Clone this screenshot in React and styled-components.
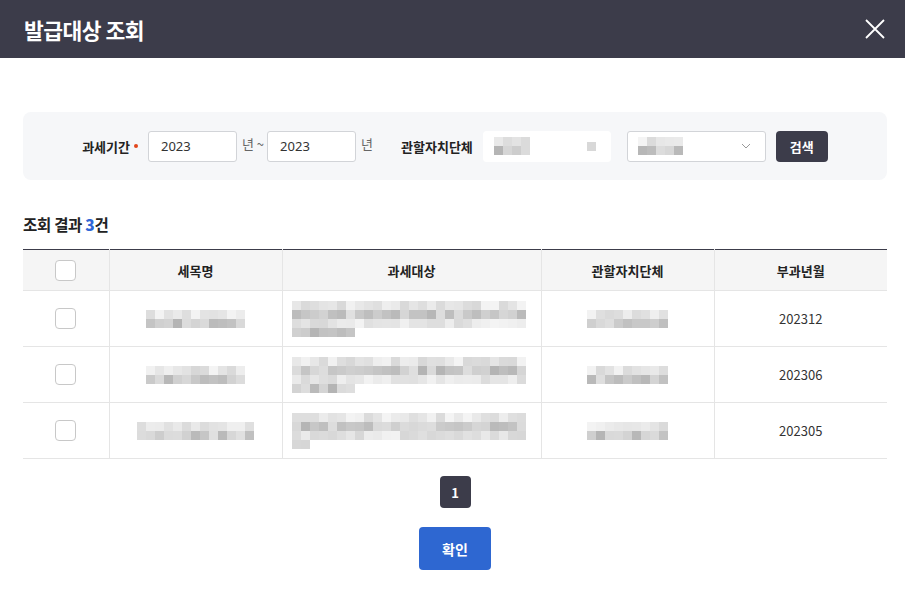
import React from "react";
import styled, { createGlobalStyle } from "styled-components";

const Global = createGlobalStyle`
  html, body { margin: 0; padding: 0; background: #fff; }
  body { font-family: "Noto Sans CJK KR", "Noto Sans", sans-serif; color: #222; }
  * { box-sizing: border-box; }
`;

const Modal = styled.div`
  width: 905px;
  height: 594px;
  background: #fff;
  display: flex;
  flex-direction: column;
  overflow: hidden;
`;

const Header = styled.header`
  height: 58px;
  flex: none;
  background: #3c3c4a;
  display: flex;
  align-items: center;
  justify-content: space-between;
  padding: 0 18px 0 24px;
`;

const Title = styled.h1`
  margin: 0;
  font-size: 21.5px;
  font-weight: 700;
  color: #fff;
  letter-spacing: -0.5px;
`;

const CloseBtn = styled.button`
  border: 0;
  background: none;
  padding: 0;
  width: 24px;
  height: 24px;
  display: flex;
  align-items: center;
  justify-content: center;
  cursor: pointer;
`;

const Body = styled.div`
  padding: 54px 18px 0 23px;
  display: flex;
  flex-direction: column;
`;

const SearchBox = styled.div`
  height: 68px;
  background: #f6f7f9;
  border-radius: 8px;
  display: flex;
  align-items: center;
  justify-content: center;
`;

const Label = styled.span`
  font-size: 13px;
  font-weight: 700;
  color: #222;
  margin-right: ${(p) => p.$mr || 10}px;
  display: inline-flex;
  align-items: center;
`;

const Req = styled.i`
  width: 4px;
  height: 4px;
  border-radius: 50%;
  background: #e2461c;
  margin-left: 4px;
  display: inline-block;
`;

const Input = styled.div`
  width: 89px;
  height: 31px;
  background: #fff;
  border: 1px solid #d2d4d8;
  border-radius: 3px;
  font-size: 13px;
  color: #333;
  display: flex;
  align-items: center;
  padding-left: 12px;
  font-family: "Noto Sans", sans-serif;
`;

const Unit = styled.span`
  font-size: 13px;
  color: #666;
  margin: 0 ${(p) => p.$mr || 3}px 0 5px;
  position: relative;
  top: -3px;
`;

const SelectBox = styled.div`
  width: ${(p) => p.$w}px;
  height: 31px;
  background: #fff;
  border: 1px solid ${(p) => (p.$bordered ? "#d2d4d8" : "#fff")};
  border-radius: 3px;
  display: flex;
  align-items: center;
  justify-content: space-between;
  padding: 0 14px 0 10px;
  margin-right: ${(p) => p.$mr || 0}px;
`;

const SearchBtn = styled.button`
  width: 52px;
  height: 31px;
  border: 0;
  border-radius: 4px;
  background: #3c3c4a;
  color: #fff;
  font-family: inherit;
  font-size: 13px;
  font-weight: 700;
  margin-left: 10px;
`;

const ResultTitle = styled.h2`
  margin: 33px 0 0;
  font-size: 15.5px;
  font-weight: 700;
  color: #222;
  letter-spacing: -0.3px;
  b { color: #2f67d6; }
`;

const Table = styled.table`
  margin-top: 14px;
  width: 864px;
  border-collapse: collapse;
  table-layout: fixed;
  border-top: 1px solid #3c3c4a;
`;

const Th = styled.th`
  height: 41px;
  background: #f5f5f5;
  font-size: 13px;
  font-weight: 700;
  color: #222;
  border-bottom: 1px solid #e5e5e5;
  border-left: 1px solid #e5e5e5;
  &:first-child { border-left: 0; }
  padding: 0;
`;

const Td = styled.td`
  height: 56px;
  font-size: 13px;
  color: #333;
  text-align: center;
  border-bottom: 1px solid #e5e5e5;
  border-left: 1px solid #e5e5e5;
  &:first-child { border-left: 0; }
  padding: 0;
  vertical-align: middle;
`;

const Check = styled.span`
  display: inline-block;
  width: 21px;
  height: 21px;
  border: 1px solid #c8c8c8;
  border-radius: 4px;
  background: #fff;
  vertical-align: middle;
`;

const CellInner = styled.div`
  display: flex;
  justify-content: ${(p) => p.$justify || "center"};
  padding-left: ${(p) => p.$pl || 0}px;
`;

const Footer = styled.div`
  display: flex;
  flex-direction: column;
  align-items: center;
  margin-top: 17px;
`;

const PageNum = styled.span`
  width: 31px;
  height: 32px;
  border-radius: 4px;
  background: #3c3c4a;
  color: #fff;
  font-size: 13px;
  font-weight: 700;
  display: flex;
  align-items: center;
  justify-content: center;
`;

const ConfirmBtn = styled.button`
  margin-top: 19px;
  width: 72px;
  height: 43px;
  border: 0;
  border-radius: 4px;
  background: #2e67d1;
  color: #fff;
  font-family: inherit;
  font-size: 14px;
  font-weight: 700;
`;

function rand(seed) {
  let s = seed * 9301 + 49297;
  return () => {
    s = (s * 9301 + 49297) % 233280;
    return s / 233280;
  };
}

function Mosaic({ cols, rows, seed, cell = 9, lastCols }) {
  const r = rand(seed);
  const rects = [];
  for (let y = 0; y < rows; y++) {
    const n = y === rows - 1 && lastCols ? lastCols : cols;
    for (let x = 0; x < n; x++) {
      const v = r();
      const g = y % 2 === 0 ? 215 + Math.floor(v * 30) : 180 + Math.floor(v * 45);
      rects.push(
        <rect key={x + "-" + y} x={x * cell} y={y * cell} width={cell} height={cell} fill={`rgb(${g},${g},${g})`} />
      );
    }
  }
  return (
    <svg width={cols * cell} height={rows * cell} style={{ display: "block" }}>
      {rects}
    </svg>
  );
}

const rows = [
  { ym: "202312", a: { c: 11, s: 3 }, b: { s: 7, last: 7 }, d: { c: 9, s: 11 } },
  { ym: "202306", a: { c: 11, s: 5 }, b: { s: 13, last: 7 }, d: { c: 9, s: 17 } },
  { ym: "202305", a: { c: 13, s: 9 }, b: { s: 21, last: 2 }, d: { c: 9, s: 23 } },
];

export default function App() {
  return (
    <>
      <Global />
      <Modal>
        <Header>
          <Title>발급대상 조회</Title>
          <CloseBtn aria-label="닫기">
            <svg width="22" height="22" viewBox="0 0 22 22">
              <path d="M2 2 L20 20 M20 2 L2 20" stroke="#fff" strokeWidth="1.8" fill="none" />
            </svg>
          </CloseBtn>
        </Header>
        <Body>
          <SearchBox>
            <Label>
              과세기간<Req />
            </Label>
            <Input>2023</Input>
            <Unit $mr={3}>년 ~</Unit>
            <Input>2023</Input>
            <Unit $mr={28}>년</Unit>
            <Label $mr={10}>관할자치단체</Label>
            <SelectBox $w={128} $mr={16}>
              <Mosaic cols={4} rows={2} seed={31} />
              <Mosaic cols={1} rows={1} seed={4} />
            </SelectBox>
            <SelectBox $w={139} $bordered>
              <Mosaic cols={5} rows={2} seed={41} />
              <svg width="10" height="6" viewBox="0 0 10 6">
                <path d="M1 1 L5 5 L9 1" stroke="#999" strokeWidth="1" fill="none" />
              </svg>
            </SelectBox>
            <SearchBtn>검색</SearchBtn>
          </SearchBox>

          <ResultTitle>
            조회 결과 <b>3</b>건
          </ResultTitle>

          <Table>
            <colgroup>
              <col style={{ width: 86 }} />
              <col style={{ width: 173 }} />
              <col style={{ width: 259 }} />
              <col style={{ width: 173 }} />
              <col style={{ width: 173 }} />
            </colgroup>
            <thead>
              <tr>
                <Th>
                  <Check />
                </Th>
                <Th>세목명</Th>
                <Th>과세대상</Th>
                <Th>관할자치단체</Th>
                <Th>부과년월</Th>
              </tr>
            </thead>
            <tbody>
              {rows.map((r) => (
                <tr key={r.ym}>
                  <Td>
                    <Check />
                  </Td>
                  <Td>
                    <CellInner>
                      <Mosaic cols={r.a.c} rows={2} seed={r.a.s} />
                    </CellInner>
                  </Td>
                  <Td>
                    <CellInner $justify="flex-start" $pl={9}>
                      <Mosaic cols={26} rows={4} seed={r.b.s} lastCols={r.b.last} />
                    </CellInner>
                  </Td>
                  <Td>
                    <CellInner>
                      <Mosaic cols={r.d.c} rows={2} seed={r.d.s} />
                    </CellInner>
                  </Td>
                  <Td>{r.ym}</Td>
                </tr>
              ))}
            </tbody>
          </Table>

          <Footer>
            <PageNum>1</PageNum>
            <ConfirmBtn>확인</ConfirmBtn>
          </Footer>
        </Body>
      </Modal>
    </>
  );
}
